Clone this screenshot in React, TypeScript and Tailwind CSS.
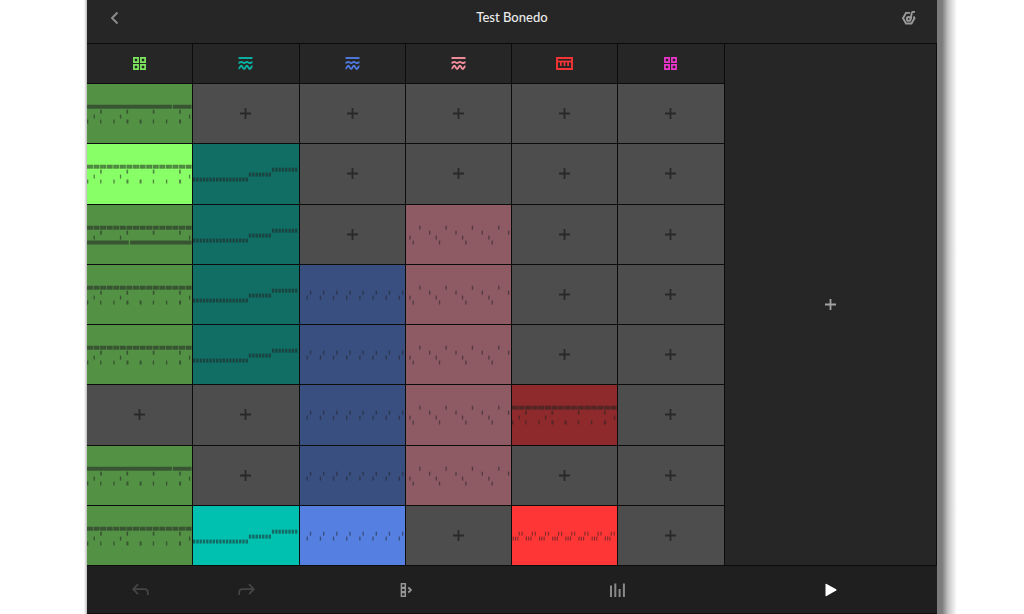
import type { ReactNode } from "react";
import clsx from "clsx";

// [lane y, start step, length] - steps are 32nds of the clip
type Note = [number, number, number];

const STEPS = 32;
const steps = Array.from({ length: STEPS }, (_, i) => i);

const HATS: Note[] = steps.map((s) => [21, s, s % 2 ? 0.8 : 1]);
const SNARES: Note[] = [4, 12, 20, 28].map((s) => [26, s, 0.5]);
const CLAPS: Note[] = [2, 10, 31].map((s) => [31, s, 0.4]);
const KICKS: Note[] = [0, 4, 8, 12, 16, 20, 24, 28].map((s) => [
  36,
  s,
  s === 12 || s === 16 || s === 28 ? 0.6 : 0.4,
]);

const PATTERNS: Record<string, Note[]> = {
  drone: [[21, 0, 25.8], [21, 26.1, 5.7], ...SNARES, ...CLAPS, ...KICKS],
  beat: [...HATS, ...SNARES, ...CLAPS, ...KICKS],
  sub: [...HATS, ...SNARES, ...CLAPS, [36, 0, 12.7], [36, 13.1, 18.7]],
  bass: steps.map((s): Note => [s < 17 ? 34 : s < 24 ? 29 : 24, s, 0.7]),
  chords: [0, 4, 8, 12, 16, 20, 24, 28].flatMap((s): Note[] => [
    [31, s + 2, 0.4],
    [26, s + 3, 0.4],
  ]),
  lead: [0, 8, 16, 24].flatMap((s): Note[] => [
    [31, s + 1, 0.4],
    [36, s + 2, 0.4],
    [21, s + 4, 0.4],
    [26, s + 7, 0.4],
  ]),
  stabs: [0, 4, 8, 12, 16, 20, 24, 28].flatMap((s): Note[] => [
    [31, s + 0.2, 0.35],
    [31, s + 0.9, 0.35],
    [31, s + 1.6, 0.35],
    [26, s + 2, 0.35],
    [26, s + 2.9, 0.35],
  ]),
};

const TRACKS = [
  { name: "Drums", icon: <PadsIcon />, color: "text-[#7ee85f]", idle: "bg-[#539145]", active: "bg-[#88ff66]" },
  { name: "Bass", icon: <WaveIcon />, color: "text-[#08b5a5]", idle: "bg-[#106e65]", active: "bg-[#00c0b0]" },
  { name: "Chords", icon: <WaveIcon />, color: "text-[#4f7ae0]", idle: "bg-[#394f80]", active: "bg-[#5580e2]" },
  { name: "Lead", icon: <WaveIcon />, color: "text-[#f7909d]", idle: "bg-[#8e5a63]", active: "bg-[#ff9aa8]" },
  { name: "Keys", icon: <KeysIcon />, color: "text-[#f53535]", idle: "bg-[#8e2a2b]", active: "bg-[#ff3636]" },
  { name: "Samples", icon: <PadsIcon />, color: "text-[#ee35cf]", idle: "bg-[#8a2a7a]", active: "bg-[#ee35cf]" },
];

// a trailing "*" marks the playing clip
const SCENES: (string | null)[][] = [
  ["drone", null, null, null, null, null],
  ["beat*", "bass", null, null, null, null],
  ["sub", "bass", null, "lead", null, null],
  ["beat", "bass", "chords", "lead", null, null],
  ["beat", "bass", "chords", "lead", null, null],
  [null, null, "chords", "lead", "beat", null],
  ["drone", null, "chords", "lead", null, null],
  ["beat", "bass*", "chords*", null, "stabs*", null],
];

export default function App() {
  return (
    <div className="flex min-h-screen bg-white font-['Lato',sans-serif]">
      <div className="w-[87px] shrink-0 bg-linear-to-l from-[#bdbdbd] to-white to-[3px]" />

      <main className="flex min-w-0 flex-1 flex-col bg-[#262626]">
        <header className="flex h-[43px] items-center justify-between px-4 pb-[7px]">
          <IconButton label="Back" className="text-[#8c8c8c]">
            <svg width="10" height="14" viewBox="0 0 10 14" fill="none" stroke="currentColor" strokeWidth="1.9">
              <path d="M7.500 1.500 2 7l5.500 5.500" />
            </svg>
          </IconButton>
          <h1 className="text-[13px] font-medium text-[#ececec]">Test Bonedo</h1>
          <IconButton label="Instrument settings" className="text-[#9a9a9a]">
            <KnobIcon />
          </IconButton>
        </header>

        <section
          aria-label="Scenes"
          className="grid flex-1 grid-cols-8 grid-rows-[39px_repeat(8,minmax(40px,1fr))] gap-px bg-[#0c0c0c] p-px pl-0"
        >
          {TRACKS.map((t) => (
            <button
              key={t.name}
              type="button"
              aria-label={t.name}
              className={clsx("flex items-center justify-center bg-[#262626]", t.color)}
            >
              {t.icon}
            </button>
          ))}

          <button
            type="button"
            aria-label="Add track"
            className="col-span-2 col-start-7 row-span-9 row-start-1 flex items-center justify-center bg-[#262626] text-[#a3a3a3]"
          >
            <PlusIcon />
          </button>

          {SCENES.map((scene, row) =>
            scene.map((clip, col) => (
              <ClipSlot key={`${row}-${col}`} clip={clip} track={TRACKS[col]} row={row + 1} />
            )),
          )}
        </section>

        <footer className="grid h-12 grid-cols-8 items-center border-b border-[#101010] bg-[#1f1f1f]">
          <IconButton label="Undo" className="text-[#454545]">
            <UndoIcon />
          </IconButton>
          <IconButton label="Redo" className="text-[#454545]">
            <UndoIcon className="-scale-x-100" />
          </IconButton>
          <IconButton label="Launch scene" className="col-span-2 text-[#969696]">
            <SceneIcon />
          </IconButton>
          <IconButton label="Mixer" className="col-span-2 text-[#8a8a8a]">
            <svg width="16" height="14" viewBox="0 0 16 14" fill="currentColor">
              <path d="M0 2.500h2V14H0zM4.300.500h2V14h-2zM8.600 6h2v8h-2zM12.900.500h2V14h-2z" />
            </svg>
          </IconButton>
          <IconButton label="Play" className="col-span-2 text-white">
            <svg width="12" height="14" viewBox="0 0 12 14" fill="currentColor">
              <path d="M.5 1.500Q.5.300 1.600.900L11.200 6.300Q12 7 11.200 7.500L1.600 13Q.5 13.500.5 12.500Z" />
            </svg>
          </IconButton>
        </footer>
      </main>

      <div className="w-[87px] shrink-0 bg-linear-to-r from-[#7c7c7c] from-[5px] via-[#c4c4c4] via-[11px] to-white to-[20px]" />
    </div>
  );
}

function ClipSlot({
  clip,
  track,
  row,
}: {
  clip: string | null;
  track: (typeof TRACKS)[number];
  row: number;
}) {
  if (!clip) {
    return (
      <button
        type="button"
        aria-label={`Add ${track.name} clip ${row}`}
        className="flex items-center justify-center bg-[#4d4d4d] text-[#292929]"
      >
        <PlusIcon />
      </button>
    );
  }

  const playing = clip.endsWith("*");
  const notes = PATTERNS[clip.replace("*", "")];

  return (
    <button
      type="button"
      aria-label={`${track.name} clip ${row}`}
      aria-pressed={playing}
      className={clsx("min-h-0 overflow-hidden", playing ? track.active : track.idle)}
    >
      <svg
        viewBox="0 0 320 60"
        preserveAspectRatio="none"
        className="h-full w-full fill-[#222222]/55"
      >
        {notes.map(([y, start, length], i) => (
          <rect key={i} x={start * 10} y={y} width={length * 10} height="4" />
        ))}
      </svg>
    </button>
  );
}

function IconButton({
  label,
  className,
  children,
}: {
  label: string;
  className?: string;
  children: ReactNode;
}) {
  return (
    <button
      type="button"
      aria-label={label}
      className={clsx("flex h-6 min-w-6 items-center justify-center", className)}
    >
      {children}
    </button>
  );
}

function PlusIcon() {
  return (
    <svg width="11" height="11" viewBox="0 0 11 11" stroke="currentColor" strokeWidth="1.8">
      <path d="M5.500 0v11M0 5.500h11" />
    </svg>
  );
}

function PadsIcon() {
  return (
    <svg width="13" height="13" viewBox="0 0 13 13" fill="none" stroke="currentColor" strokeWidth="1.7">
      <path d="M.9.9h4.200v4.200H.9zM7.900.9h4.200v4.200H7.900zM.9 7.900h4.200v4.200H.9zM7.900 7.900h4.200v4.200H7.900z" />
    </svg>
  );
}

function WaveIcon() {
  return (
    <svg width="15" height="13" viewBox="0 0 15 13" fill="none" stroke="currentColor" strokeWidth="1.900">
      <path d="M.5 1h14" />
      <path d="M.5 5.800c1.400 0 1.600-.9 2.800-.9s1.600 1.200 2.800 1.200 1.600-1.200 2.800-1.200 1.600 1.200 2.800 1.200 1.600-.9 2.800-.9" />
      <path d="M.5 11.500C2 11.500 2 8.800 3.300 8.800S4.800 12 6.100 12s1.500-3.200 2.800-3.200 1.500 3.200 2.800 3.200 1.300-2.800 2.800-2.800" />
    </svg>
  );
}

function KeysIcon() {
  return (
    <svg width="17" height="13" viewBox="0 0 17 13" fill="none" stroke="currentColor" strokeWidth="1.900">
      <path d="M1 1h15v11H1z" />
      <path d="M1 4.500h15" strokeWidth="1.700" />
      <path d="M4.900 4.500v4.500M8.500 4.500v4.500M12.100 4.500v4.500" strokeWidth="1.700" />
    </svg>
  );
}

function KnobIcon() {
  return (
    <svg width="14" height="14" viewBox="0 0 14 14" fill="none" stroke="currentColor" strokeWidth="1.900">
      <path d="M8 1.900H4L1 7.200l3 5.300h5.500l3-5.300-.9-1.700" />
      <circle cx="6.700" cy="7.900" r="1.900" />
      <path d="M8.700 8 9.700 2.200Q9.900 1 11.100.9H13" />
    </svg>
  );
}

function UndoIcon({ className }: { className?: string }) {
  return (
    <svg
      width="17"
      height="14"
      viewBox="0 0 17 14"
      fill="none"
      stroke="currentColor"
      strokeWidth="1.700"
      className={className}
    >
      <path d="M6 1.200 1.200 6.200l4.800 5M1.200 6.200h11.200q3.400 0 3.400 3.300V12" />
    </svg>
  );
}

function SceneIcon() {
  return (
    <svg width="12" height="14" viewBox="0 0 12 14" fill="none" stroke="currentColor" strokeWidth="1.500">
      <path d="M1.400.800h3.900v3.600H1.400zM1.400 5.200h3.900v3.600H1.400zM1.400 9.600h3.900v3.600H1.400z" />
      <path d="m8.300 4.500 2.700 2.500-2.700 2.500" strokeWidth="1.800" />
    </svg>
  );
}
